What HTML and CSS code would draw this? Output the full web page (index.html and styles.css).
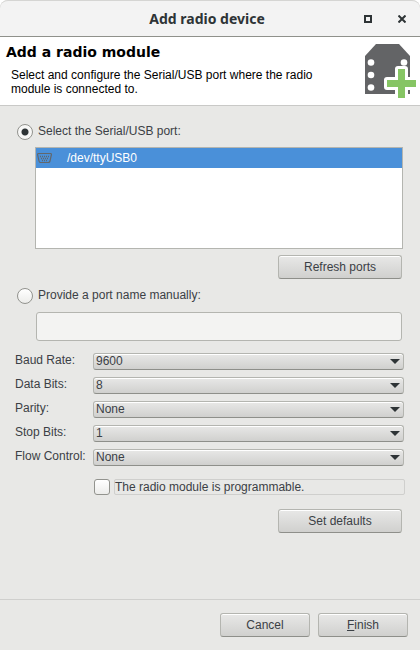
FILE: index.html
```html
<!DOCTYPE html>
<html lang="en">
<head>
<meta charset="utf-8">
<meta name="viewport" content="width=device-width, initial-scale=1">
<title>Add radio device</title>
<link rel="stylesheet" href="styles.css">
</head>
<body>
<div class="window">
  <header class="titlebar">
    <h1 class="titlebar-title">Add radio device</h1>
    <div class="window-controls">
      <button class="window-button" type="button" aria-label="Maximize">
        <svg width="8" height="8" viewBox="0 0 8 8"><path d="M1 1H7V7H1Z" fill="none" stroke="#2e3436" stroke-width="2"/></svg>
      </button>
      <button class="window-button" type="button" aria-label="Close">
        <svg width="8" height="8" viewBox="0 0 8 8"><path d="M.5.5L7.500 7.500M7.500.5L.5 7.500" fill="none" stroke="#2e3436" stroke-width="2"/></svg>
      </button>
    </div>
  </header>

  <section class="banner">
    <div class="banner-text">
      <h2 class="banner-title">Add a radio module</h2>
      <p class="banner-description">Select and configure the Serial/USB port where the radio module is connected to.</p>
    </div>
    <svg class="banner-icon" width="52" height="56" viewBox="0 0 52 56" aria-hidden="true">
      <path d="M1 13L12 1H35L46 13V51H1Z" fill="#636466"/>
      <g fill="#fff"><circle cx="7" cy="19.500" r="3.300"/><circle cx="40" cy="19.500" r="3.300"/><circle cx="7" cy="32" r="3.300"/><circle cx="7" cy="44.500" r="3.300"/></g>
      <path d="M34 26H41V37H52V44H41V55H34V44H23V37H34Z" fill="#86c564" stroke="#fff" stroke-width="6" stroke-linejoin="round" paint-order="stroke"/>
    </svg>
  </section>

  <form class="form" id="module-form">
    <label class="choice"><input class="radio" type="radio" name="source" checked>Select the Serial/USB port:</label>
    <ul class="ports" role="listbox" aria-label="Serial/USB ports" tabindex="0">
      <li class="port" role="option" aria-selected="true">
        <svg width="15" height="10" viewBox="0 0 15 10" aria-hidden="true">
          <path d="M1.500.5H13.500Q14.500.5 14.400 1.700L13 8Q12.700 9.500 11.300 9.500H3.700Q2.300 9.500 2 8L.6 1.700Q.5.5 1.500.5Z" fill="none" stroke="#62676c" stroke-width="1.200"/>
          <path d="M3 3.500H4M5 3.500H6M7 3.500H8M9 3.500H10M11 3.500H12M4 5.500H5M6 5.500H7M8 5.500H9M10 5.500H11M5 7.500H6M7 7.500H8M9 7.500H10" stroke="#62676c" stroke-width="1.500"/>
        </svg>
        <span>/dev/ttyUSB0</span>
      </li>
    </ul>
    <div class="form-actions refresh"><button class="button wide" type="button">Refresh ports</button></div>

    <label class="choice"><input class="radio" type="radio" name="source">Provide a port name manually:</label>
    <input class="port-name" type="text" aria-label="Port name" disabled>

    <div class="settings">
      <label for="baud">Baud Rate:</label>
      <span class="select-wrap"><select id="baud" class="select"><option>9600</option></select></span>
      <label for="data">Data Bits:</label>
      <span class="select-wrap"><select id="data" class="select"><option>8</option></select></span>
      <label for="parity">Parity:</label>
      <span class="select-wrap"><select id="parity" class="select"><option>None</option></select></span>
      <label for="stop">Stop Bits:</label>
      <span class="select-wrap"><select id="stop" class="select"><option>1</option></select></span>
      <label for="flow">Flow Control:</label>
      <span class="select-wrap"><select id="flow" class="select"><option>None</option></select></span>
    </div>

    <div class="programmable">
      <input class="checkbox" type="checkbox" id="programmable">
      <label class="programmable-label" for="programmable">The radio module is programmable.</label>
    </div>
    <div class="form-actions"><button class="button wide" type="button">Set defaults</button></div>
  </form>

  <footer class="footer">
    <button class="button" type="button">Cancel</button>
    <button class="button" type="submit" form="module-form"><span><u>F</u>inish</span></button>
  </footer>
</div>
</body>
</html>
```

FILE: styles.css
```css
* {
  box-sizing: border-box;
}

body {
  margin: 0;
  background: #fff;
  color: #3b4045;
  font: 12px/14px "Liberation Sans", Arial, sans-serif;
}

button, input, select {
  margin: 0;
  color: inherit;
  font: inherit;
}

.window {
  display: flex;
  flex-direction: column;
  min-height: 100vh;
  background: #e8e8e6;
  border-radius: 8px 8px 0 0;
}

.titlebar {
  display: grid;
  grid-template-columns: 1fr auto 1fr;
  align-items: center;
  height: 37px;
  padding: 0 8px 0 2px;
  background: #f3f3f3;
  border-top: 1px solid #d5d5d3;
  border-bottom: 1px solid #8f918b;
  border-radius: 8px 8px 0 0;
}

.titlebar-title {
  grid-column: 2;
  margin: 0;
  color: #2e3436;
  font: bold 14px/20px "Noto Sans", sans-serif;
}

.window-controls {
  display: flex;
  justify-content: flex-end;
  gap: 14px;
}

.window-button {
  display: flex;
  align-items: center;
  justify-content: center;
  width: 20px;
  height: 20px;
  padding: 0;
  background: none;
  border: 0;
}

.banner {
  display: flex;
  justify-content: space-between;
  height: 69px;
  padding: 6px 4px 0 6px;
  background: #fff;
  border-bottom: 1px solid #c9c9c7;
  color: #000;
}

.banner-title {
  margin: 0;
  font: bold 14px/18px "DejaVu Sans", sans-serif;
}

.banner-description {
  max-width: 330px;
  margin: 7px 0 0;
  padding: 0 5px;
}

.banner-icon {
  flex: none;
  overflow: visible;
}

.form {
  flex: 1;
  padding: 18px 15px 0;
}

.choice {
  display: flex;
  align-items: flex-start;
  gap: 5px;
  height: 16px;
  padding-left: 2px;
}

.radio, .checkbox {
  appearance: none;
  flex: none;
  width: 16px;
  height: 16px;
  border: 1px solid #92938e;
  background: linear-gradient(#fff, #ececea);
}

.radio {
  border-radius: 50%;
}

.radio:checked {
  background: radial-gradient(circle, #2e3436 3px, #f7f7f6 4px);
}

.checkbox {
  border-radius: 3px;
}

.ports {
  height: 102px;
  margin: 7px 2px 6px 20px;
  padding: 0;
  background: #fff;
  border: 1px solid #b4b5b0;
  list-style: none;
}

.port {
  display: flex;
  align-items: center;
  gap: 15px;
  height: 20px;
  padding-left: 1px;
  background: #4a90d9;
  color: #fff;
}

.form-actions {
  display: flex;
  justify-content: flex-end;
  padding-right: 3px;
}

.refresh {
  margin-bottom: 9px;
}

.button {
  display: flex;
  align-items: center;
  justify-content: center;
  width: 90px;
  height: 24px;
  padding: 0;
  background: linear-gradient(#e8e8e7, #d0d0ce);
  border: 1px solid #b4b5b0;
  border-bottom-color: #8e8f8a;
  border-radius: 3px;
  box-shadow: inset 0 1px #fff;
}

.wide {
  width: 124px;
}

.port-name {
  display: block;
  width: calc(100% - 24px);
  height: 29px;
  margin: 8px 0 12px 21px;
  padding: 0 6px;
  background: #f3f3f2;
  border: 1px solid #b4b5b0;
  border-radius: 3px;
}

.settings {
  display: grid;
  grid-template-columns: 78px 1fr;
  row-gap: 7px;
  align-items: start;
  margin-right: 1px;
  white-space: nowrap;
}

.select-wrap {
  display: flex;
  position: relative;
}

.select-wrap::after {
  content: "";
  position: absolute;
  top: 6px;
  right: 4px;
  width: 10px;
  height: 5px;
  background: #2e3436;
  clip-path: polygon(0 0, 100% 0, 50% 100%);
  pointer-events: none;
}

.select {
  appearance: none;
  width: 100%;
  height: 17px;
  padding: 0 20px 2px 2px;
  background: linear-gradient(#e8e8e7, #d0d0ce);
  border: 1px solid #b4b5b0;
  border-bottom-color: #8e8f8a;
  border-radius: 3px;
  box-shadow: inset 0 1px #fff;
}

.programmable {
  display: flex;
  gap: 4px;
  margin: 13px 0 14px 79px;
}

.programmable-label {
  flex: 1;
  height: 16px;
  border: 1px solid #cfcfcd;
  border-radius: 2px;
}

.footer {
  display: flex;
  justify-content: flex-end;
  gap: 8px;
  height: 51px;
  padding: 13px 12px 0;
  border-top: 1px solid #cfcfcd;
}
```
